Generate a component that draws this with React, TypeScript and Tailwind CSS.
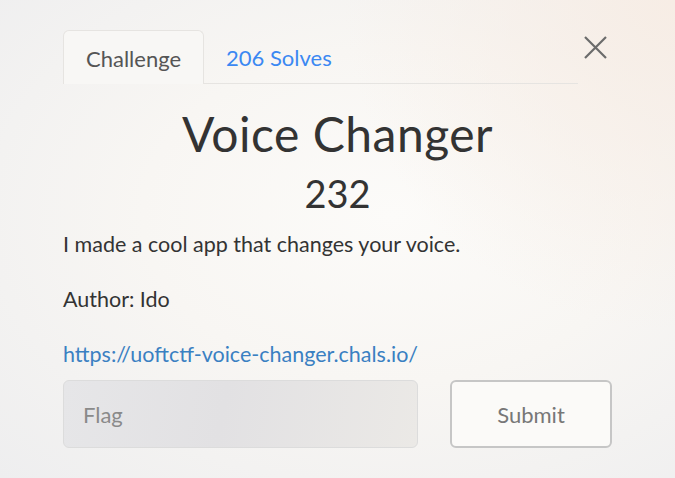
import { useState } from "react";

const bg =
  "bg-[radial-gradient(circle_at_100%_0%,#f7ede5_0%,rgba(247,237,229,0)_40%),radial-gradient(ellipse_at_58%_45%,#fcfbf9_0%,#f8f6f3_45%,#eeeeef_100%)]";

export default function App() {
  const [flag, setFlag] = useState("");

  return (
    <div className={`min-h-screen w-full ${bg} font-['Lato','Noto_Sans',sans-serif] text-[#333]`}>
      <div className="px-[63px] pt-[30px]">
        {/* Tabs */}
        <div className="flex items-start">
          <ul className="flex flex-1 border-b border-[#e6e4e1]">
            <li className="-mb-px rounded-t-[6px] border border-b-0 border-[#e6e4e1] bg-[#f8f7f5] px-[22px] pt-[15px] pb-[12px] text-[22px] leading-[26px] text-[#555]">
              Challenge
            </li>
            <li className="px-[22px] pt-[15px] pb-[12px] text-[22px] leading-[26px] text-[#3b88f2]">206 Solves</li>
          </ul>
          <button className="flex h-[34px] w-[34px] items-center justify-center text-[#6b6b6b]">
            <svg width="23" height="23" viewBox="0 0 23 23" fill="none" stroke="currentColor" strokeWidth="2.2">
              <path d="M1 1 L22 22 M22 1 L1 22" />
            </svg>
          </button>
        </div>

        {/* Heading */}
        <h2 className="mt-[21px] text-center text-[48px] leading-[1.2] font-normal tracking-[0.5px] text-[#333]">
          Voice Changer
        </h2>
        <h3 className="mt-[8px] text-center text-[38px] leading-[1.2] font-normal text-[#333]">232</h3>

        {/* Description */}
        <div className="mt-[12px] text-[21.5px] leading-[33px] text-[#333]">
          <p className="mb-[22px]">I made a cool app that changes your voice.</p>
          <p className="mb-[22px]">Author: Ido</p>
          <p>
            <a href="#" className="text-[#3a80c2]">
              https://uoftctf-voice-changer.chals.io/
            </a>
          </p>
        </div>

        {/* Flag form */}
        <div className="mt-[9px] flex gap-[32px]">
          <input
            value={flag}
            onChange={(e) => setFlag(e.target.value)}
            placeholder="Flag"
            className="h-[68px] flex-1 rounded-[6px] border border-[#dcdcdc] bg-[linear-gradient(100deg,#e6e6e8_0%,#e2e1e3_45%,#ebe9e6_100%)] px-[19px] text-[22px] text-[#555] outline-none placeholder:text-[#8a8a8a]"
          />
          <button className="h-[68px] w-[162px] rounded-[6px] border-2 border-[#c6c6c6] bg-[#fbfaf8] text-[22px] text-[#777]">
            Submit
          </button>
        </div>
      </div>
    </div>
  );
}
